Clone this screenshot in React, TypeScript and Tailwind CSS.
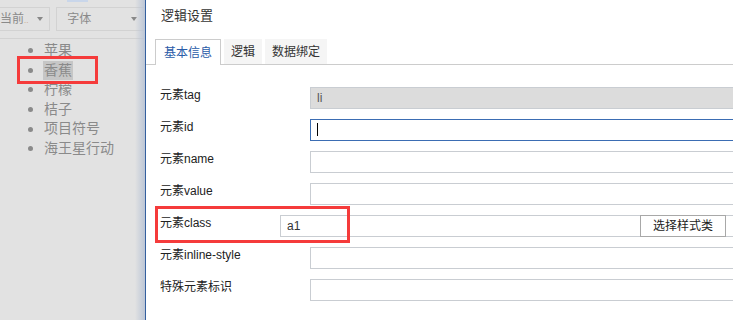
import { useState } from 'react'

const font = { fontFamily: '"Liberation Sans", "Noto Sans CJK SC", sans-serif' }

const fruits = ['苹果', '香蕉', '柠檬', '桔子', '项目符号', '海王星行动']

interface Field {
  label: string
  value?: string
  kind?: 'disabled' | 'focus' | 'class'
}

const fields: Field[] = [
  { label: '元素tag', value: 'li', kind: 'disabled' },
  { label: '元素id', kind: 'focus' },
  { label: '元素name' },
  { label: '元素value' },
  { label: '元素class', value: 'a1', kind: 'class' },
  { label: '元素inline-style' },
  { label: '特殊元素标识' },
]

function FieldRow({ field }: { field: Field }) {
  if (field.kind === 'class') {
    return (
      <div className="relative flex items-start h-[22px]">
        <div className="w-[120px] shrink-0 pt-[1px] text-[12px] leading-[14px] text-[#222]">{field.label}</div>
        <div className="flex-1 h-[22px] border border-[#c9cdd2] bg-white pl-[6px] text-[12px] leading-[20px] text-[#333] mr-[-20px]">
          {field.value}
        </div>
        <button className="absolute left-[480px] top-0 w-[86px] h-[22px] border border-[#a8a8a8] bg-white text-[12px] leading-[20px] text-[#222]">
          选择样式类
        </button>
        {/* highlight box */}
        <div className="absolute left-[-5px] top-[-9px] w-[195px] h-[37px] border-[3px] border-[#f53b3b] pointer-events-none" />
      </div>
    )
  }
  const box =
    field.kind === 'disabled'
      ? 'bg-[#dcdcdc] border-[#c9cdd2] text-[#555]'
      : field.kind === 'focus'
        ? 'bg-white border-[#3b6db3]'
        : 'bg-white border-[#c9cdd2]'
  return (
    <div className="flex items-start h-[22px]">
      <div className="w-[150px] shrink-0 pt-[1px] text-[12px] leading-[14px] text-[#222]">{field.label}</div>
      <div className={`flex-1 h-[22px] border pl-[6px] text-[12px] leading-[20px] mr-[-20px] ${box}`}>
        {field.value}
        {field.kind === 'focus' && <span className="inline-block w-[1px] h-[13px] bg-black mt-[3px]" />}
      </div>
    </div>
  )
}

export default function App() {
  const [tab, setTab] = useState(0)
  const tabs = ['基本信息', '逻辑', '数据绑定']

  return (
    <div className="flex w-[733px] h-[320px] overflow-hidden bg-white" style={font}>
      {/* left: preview */}
      <div className="relative w-[145px] shrink-0 bg-[#e2e2e2]">
        <div className="absolute left-[67px] top-0 w-[21px] h-[2px] bg-[#c9d6ea]" />
        <div className="flex gap-[6px] pt-[7px] ml-[-10px] h-[39px] border-b border-[#d2d2d2]">
          <div className="flex items-center justify-between w-[61px] h-[24px] border border-[#d2d2d2] pl-[9px] pr-[6px] text-[12px] text-[#8a8a8a]">
            <span>当前<span className="text-[8px] text-[#c9a07a]">..</span></span>
            <span className="w-0 h-0 border-l-[3px] border-r-[3px] border-t-[4px] border-l-transparent border-r-transparent border-t-[#888]" />
          </div>
          <div className="flex items-center justify-between w-[90px] h-[24px] border border-[#d2d2d2] pl-[10px] pr-[7px] text-[12px] text-[#8a8a8a]">
            <span>字体</span>
            <span className="w-0 h-0 border-l-[3px] border-r-[3px] border-t-[4px] border-l-transparent border-r-transparent border-t-[#888]" />
          </div>
        </div>
        <ul className="mt-[2px] pl-[28px] text-[14px] leading-[19.6px] text-[#8a8a8a]">
          {fruits.map((f, i) => (
            <li key={f} className="flex items-center h-[19.6px]">
              <span className="w-[5px] h-[5px] rounded-full bg-[#8a8a8a] mr-[10px]" />
              <span className={i === 1 ? 'bg-[#c6c6c6] px-[1px]' : 'px-[1px]'}>{f}</span>
            </li>
          ))}
        </ul>
        <div className="absolute left-[17px] top-[56px] w-[81px] h-[28px] border-[3px] border-[#f53b3b]" />
        <div className="absolute right-0 top-0 w-[10px] h-full bg-gradient-to-r from-transparent to-[#bcc6d6]" />
      </div>
      <div className="w-[1px] shrink-0 bg-[#34609f]" />

      {/* right: settings dialog */}
      <div className="flex-1 min-w-0 flex flex-col">
        <div className="pl-[15px] pt-[8px] h-[39px] text-[13px] leading-[16px] text-[#333]">逻辑设置</div>
        <div className="flex pl-[9px] gap-[3px] h-[26px] border-b border-[#cccccc]">
          {tabs.map((t, i) =>
            i === tab ? (
              <button
                key={t}
                onClick={() => setTab(i)}
                className="h-[26px] px-[8px] border border-b-0 border-[#cccccc] bg-white text-[12px] text-[#2a5ca8]"
              >
                {t}
              </button>
            ) : (
              <button
                key={t}
                onClick={() => setTab(i)}
                className="h-[25px] px-[7px] bg-[#f5f5f5] text-[12px] text-[#333]"
              >
                {t}
              </button>
            ),
          )}
        </div>
        <div className="flex flex-col gap-[10px] pt-[22px] pl-[14px]">
          {fields.map(f => (
            <FieldRow key={f.label} field={f} />
          ))}
        </div>
      </div>
    </div>
  )
}
